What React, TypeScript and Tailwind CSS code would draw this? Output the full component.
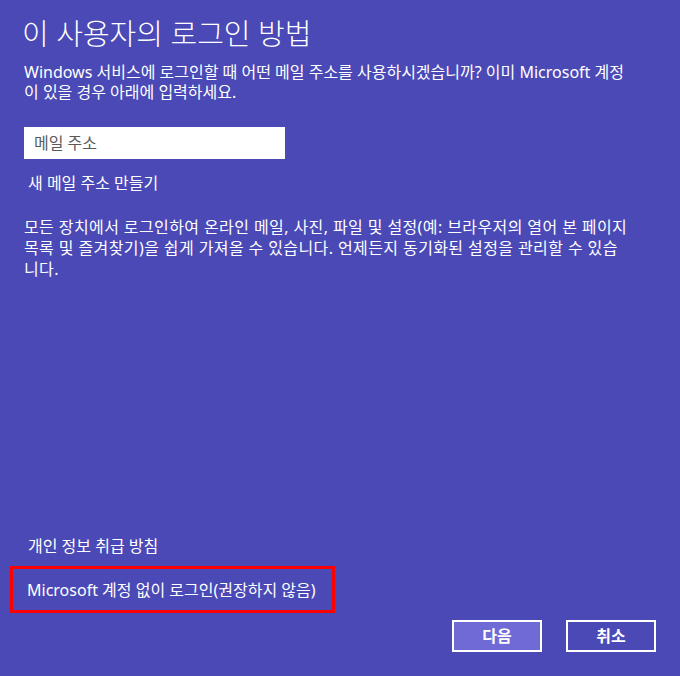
const font = { fontFamily: '"Noto Sans", "Noto Sans CJK KR", sans-serif' };

export default function App() {
  return (
    <div
      className="flex h-[676px] w-[680px] flex-col bg-[#4a49b6] text-white"
      style={font}
    >
      <h1 className="ml-[22px] mt-[14px] text-[29px] font-light leading-[40px]">
        이 사용자의 로그인 방법
      </h1>
      <p className="ml-[24px] mt-[8px] text-[16px] leading-[20px]">
        <span className="block whitespace-nowrap">
          Windows 서비스에 로그인할 때 어떤 메일 주소를 사용하시겠습니까? 이미 Microsoft 계정
        </span>
        <span className="block whitespace-nowrap">이 있을 경우 아래에 입력하세요.</span>
      </p>

      <div className="ml-[24px] mt-[25px] flex h-[32px] w-[261px] items-center bg-white px-[10px] text-[16px] text-[#5a5a5a]">
        메일 주소
      </div>
      <a className="ml-[28px] mt-[14px] text-[16px] leading-[20px]">새 메일 주소 만들기</a>

      <p className="ml-[24px] mt-[24px] text-[16px] leading-[21px] tracking-[0.4px]">
        <span className="block whitespace-nowrap">
          모든 장치에서 로그인하여 온라인 메일, 사진, 파일 및 설정(예: 브라우저의 열어 본 페이지
        </span>
        <span className="block whitespace-nowrap">
          목록 및 즐겨찾기)을 쉽게 가져올 수 있습니다. 언제든지 동기화된 설정을 관리할 수 있습
        </span>
        <span className="block whitespace-nowrap">니다.</span>
      </p>

      <div className="mt-auto flex flex-col">
        <a className="ml-[28px] text-[16px] leading-[20px]">개인 정보 취급 방침</a>
        <div className="ml-[10px] mt-[10px] flex h-[47px] w-[325px] items-center border-[3px] border-[#ff0000] pl-[14px]">
          <a className="whitespace-nowrap text-[16px] leading-[20px]">
            Microsoft 계정 없이 로그인(권장하지 않음)
          </a>
        </div>
        <div className="mb-[24px] mr-[24px] mt-[7px] flex justify-end gap-[24px]">
          <button className="h-[32px] w-[90px] border-2 border-white bg-[#6f6ad6] text-[16px] font-semibold">
            다음
          </button>
          <button className="h-[32px] w-[90px] border-2 border-white text-[16px] font-semibold">
            취소
          </button>
        </div>
      </div>
    </div>
  );
}
